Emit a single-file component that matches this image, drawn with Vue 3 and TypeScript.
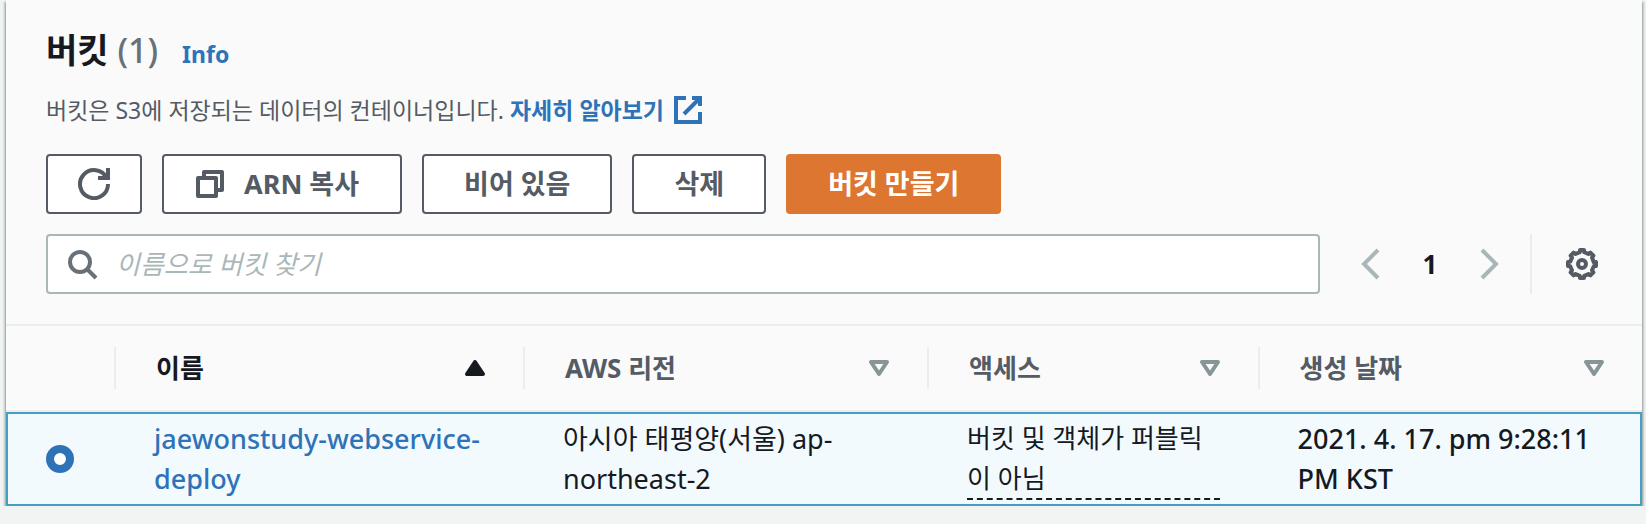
<script setup lang="ts">
import { ref } from 'vue'

interface Column {
  key: string
  label: string
}

interface Bucket {
  name: string
  region: string
  access: string
  created: string
}

const columns: Column[] = [
  { key: 'name', label: '이름' },
  { key: 'region', label: 'AWS 리전' },
  { key: 'access', label: '액세스' },
  { key: 'created', label: '생성 날짜' },
]

const buckets: Bucket[] = [
  {
    name: 'jaewonstudy-webservice-deploy',
    region: '아시아 태평양(서울) ap-northeast-2',
    access: '버킷 및 객체가 퍼블릭이 아님',
    created: '2021. 4. 17. pm 9:28:11 PM KST',
  },
]

const sortedBy = ref('name')
const selected = ref(buckets[0].name)
const query = ref('')
</script>

<template>
  <main class="panel">
    <header class="panel-header">
      <div class="title-row">
        <h1>버킷 <span class="count">(1)</span></h1>
        <a class="info" href="#info">Info</a>
      </div>
      <p class="description">
        버킷은 S3에 저장되는 데이터의 컨테이너입니다.
        <a class="learn" href="#learn">자세히 알아보기<svg class="icon external" viewBox="0 0 16 16" aria-hidden="true"><path d="M10 2h4v4M6 10l8-8M14 9v5H2V2h5" /></svg></a>
      </p>
      <div class="actions">
        <button type="button" class="btn btn-icon" aria-label="새로 고침">
          <svg class="icon" viewBox="0 0 16 16" aria-hidden="true"><path d="M10 5h5V0M15 8a7 7 0 1 1-.7-3" /></svg>
        </button>
        <button type="button" class="btn btn-copy">
          <svg class="icon round" viewBox="0 0 16 16" aria-hidden="true"><path d="M2 5h9v9H2zM5 5V2h9v9h-3" /></svg>
          ARN 복사
        </button>
        <button type="button" class="btn">비어 있음</button>
        <button type="button" class="btn">삭제</button>
        <button type="button" class="btn btn-primary">버킷 만들기</button>
      </div>
      <div class="tools">
        <label class="search">
          <svg class="icon" viewBox="0 0 16 16" aria-hidden="true"><circle cx="7" cy="7" r="5" /><path d="M10.5 10.5L15 15" /></svg>
          <input v-model="query" type="text" aria-label="이름으로 버킷 찾기" placeholder="이름으로 버킷 찾기" />
        </label>
        <nav class="pages" aria-label="페이지">
          <button type="button" class="plain arrow" aria-label="이전 페이지">
            <svg class="icon" viewBox="0 0 16 16" aria-hidden="true"><path d="M11 1L4 8l7 7" /></svg>
          </button>
          <button type="button" class="plain page">1</button>
          <button type="button" class="plain arrow" aria-label="다음 페이지">
            <svg class="icon" viewBox="0 0 16 16" aria-hidden="true"><path d="M5 1l7 7-7 7" /></svg>
          </button>
        </nav>
        <div class="settings">
          <button type="button" class="plain gear" aria-label="기본 설정">
            <svg class="icon round" viewBox="0 0 16 16" aria-hidden="true">
              <circle cx="8" cy="8" r="2" />
              <path d="M13.9 7.1L15 7v2l-1.1.1-.9 2.1.7 1-1.5 1.5-1-.7-2.1.9L9 15H7l-.1-1.1-2.1-.9-1 .7-1.5-1.5.7-1-.9-2.1L1 9V7l1.1-.1.9-2.1-.7-1 1.5-1.5 1 .7 2.1-.9L7 1h2l.1 1.1 2.1.9 1-.7 1.5 1.5-.7 1z" />
            </svg>
          </button>
        </div>
      </div>
    </header>

    <table>
      <colgroup>
        <col class="col-select" />
        <col class="col-name" />
        <col class="col-region" />
        <col class="col-access" />
        <col />
      </colgroup>
      <thead>
        <tr>
          <th aria-label="선택"><div class="head"></div></th>
          <th v-for="column in columns" :key="column.key" scope="col">
            <button type="button" class="plain head" :class="{ sorted: sortedBy === column.key }" @click="sortedBy = column.key">
              {{ column.label }}
              <svg class="icon round" viewBox="0 0 16 16" aria-hidden="true">
                <path v-if="sortedBy === column.key" class="solid" d="M4 11h8L8 5z" />
                <path v-else d="M4 5h8l-4 6z" />
              </svg>
            </button>
          </th>
        </tr>
      </thead>
      <tbody>
        <tr v-for="bucket in buckets" :key="bucket.name" :class="{ selected: selected === bucket.name }">
          <td><input v-model="selected" type="radio" name="bucket" :value="bucket.name" :aria-label="bucket.name" /></td>
          <td class="medium"><a :href="'#' + bucket.name">{{ bucket.name }}</a></td>
          <td>{{ bucket.region }}</td>
          <td><div class="access">{{ bucket.access }}</div></td>
          <td class="medium">{{ bucket.created }}</td>
        </tr>
      </tbody>
    </table>
  </main>
</template>

<style>
body {
  margin: 0;
  background: #f2f3f3;
}
</style>

<style scoped>
* {
  box-sizing: border-box;
}

.panel {
  margin: 0 4px 0 6px;
  background: #fafafa;
  color: #16191f;
  font-family: "Noto Sans", "Noto Sans CJK KR", sans-serif;
  font-size: 26px;
  line-height: 40px;
  box-shadow:
    0 2px 2px 0 rgba(0, 28, 36, 0.4),
    2px 2px 2px 0 rgba(0, 28, 36, 0.2),
    -2px 2px 2px 0 rgba(0, 28, 36, 0.2);
}

.panel-header {
  padding: 28px 40px 30px;
  border-bottom: 2px solid #eaeded;
}

a {
  color: #2e73b8;
  text-decoration: none;
}

.icon {
  display: block;
  flex: none;
  width: 32px;
  height: 32px;
  fill: none;
  stroke: currentColor;
  stroke-width: 2;
}

.round {
  stroke-linejoin: round;
}

.solid {
  fill: currentColor;
}

.title-row {
  display: flex;
  align-items: baseline;
  gap: 24px;
}

h1 {
  margin: 0;
  font-size: 34px;
  line-height: 44px;
  font-weight: 700;
}

.count {
  color: #687078;
  font-weight: 500;
}

.info {
  font-size: 23px;
  font-weight: 700;
}

.description {
  display: flex;
  align-items: center;
  gap: 6px;
  margin: 18px 0 26px;
  color: #545b64;
  font-size: 23px;
  line-height: 36px;
}

.learn {
  display: flex;
  align-items: center;
  gap: 8px;
  font-weight: 700;
}

.actions {
  display: flex;
  flex-wrap: wrap;
  gap: 20px;
}

button {
  font: inherit;
  color: inherit;
  cursor: pointer;
}

.btn {
  display: flex;
  align-items: center;
  justify-content: center;
  height: 60px;
  padding: 0 40px;
  border: 2px solid #545b64;
  border-radius: 4px;
  background: #fff;
  color: #545b64;
  font-size: 27px;
  font-weight: 700;
}

.btn-icon {
  padding: 0 30px;
}

.btn-copy {
  gap: 18px;
  padding: 0 41px 0 30px;
}

.btn-primary {
  border-color: #dd7631;
  background: #dd7631;
  color: #fff;
}

.tools {
  display: flex;
  align-items: center;
  margin-top: 20px;
}

.search {
  display: flex;
  flex: 1;
  align-items: center;
  gap: 18px;
  height: 60px;
  padding: 0 18px;
  border: 2px solid #aab7b8;
  border-radius: 4px;
  background: #fff;
  color: #687078;
}

.search input {
  flex: 1;
  min-width: 0;
  padding: 0;
  border: 0;
  outline: 0;
  background: none;
  color: #16191f;
  font: inherit;
}

.search input::placeholder {
  color: #aab7b8;
  font-style: italic;
  opacity: 1;
}

.plain {
  padding: 0;
  border: 0;
  background: none;
}

.pages {
  display: flex;
  align-items: center;
  justify-content: space-between;
  width: 210px;
  padding: 0 26px 0 36px;
}

.arrow {
  color: #aab7b8;
}

.page {
  font-weight: 700;
}

.settings {
  display: flex;
  align-items: center;
  height: 60px;
  padding: 0 4px 0 34px;
  border-left: 2px solid #eaeded;
  color: #545b64;
}

table {
  width: 100%;
  table-layout: fixed;
  border-collapse: separate;
  border-spacing: 0;
}

.col-select {
  width: 110px;
}

.col-name {
  width: 25%;
}

.col-region {
  width: 24.7%;
}

.col-access {
  width: 20.2%;
}

th {
  padding: 21px 0;
  border-bottom: 2px solid #eaeded;
  color: #545b64;
  text-align: left;
}

.head {
  display: flex;
  align-items: center;
  justify-content: space-between;
  width: 100%;
  height: 42px;
  padding: 0 32px 0 40px;
  border-right: 2px solid #eaeded;
  font-weight: 700;
}

th:last-child .head {
  border-right: 0;
}

.head .icon {
  color: #879596;
}

.sorted,
.sorted .icon {
  color: #16191f;
}

td {
  padding: 4px 40px 4px 38px;
  border: 0 solid transparent;
  border-width: 2px 0;
  font-size: 27px;
  vertical-align: middle;
  overflow-wrap: anywhere;
}

.medium {
  font-weight: 500;
}

.selected td {
  border-color: #449fc6;
  background: #f2fafe;
}

.selected td:first-child {
  border-left: 2px solid #449fc6;
}

.selected td:last-child {
  border-right: 2px solid #449fc6;
}

td:nth-child(2),
td:last-child {
  padding-right: 30px;
}

td input {
  display: block;
  appearance: none;
  width: 28px;
  height: 28px;
  margin: 0;
  border: 2px solid #879596;
  border-radius: 50%;
  background: #fff;
}

td input:checked {
  border: 8px solid #2e73b8;
}

.access {
  border-bottom: 2px dashed #16191f;
  font-size: 26px;
}
</style>
